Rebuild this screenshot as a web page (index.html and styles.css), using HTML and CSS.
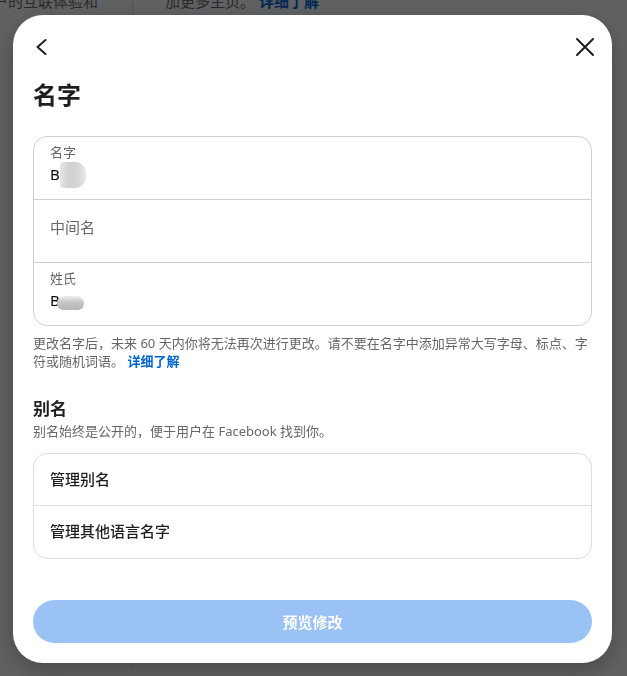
FILE: index.html
```html
<!DOCTYPE html>
<html lang="zh-CN">
<head>
  <meta charset="UTF-8">
  <meta name="viewport" content="width=device-width, initial-scale=1.0">
  <title>名字</title>
  <link rel="stylesheet" href="styles.css">
</head>
<body>

  <div class="page">
    <div class="side">
      <p class="side-text">户的互联体验和</p>
    </div>
    <div class="main">
      <p class="main-text">加更多主页。 <a href="#">详细了解</a></p>
    </div>
  </div>

  <div class="overlay">
    <div class="dialog">

      <div class="dialog-head">
        <svg class="icon" width="24" height="24" viewBox="0 0 24 24"><path d="M16.5 5 L8.5 12 L16.5 19" /></svg>
        <svg class="icon" width="24" height="24" viewBox="0 0 24 24"><path d="M4 4 L20 20 M20 4 L4 20" /></svg>
      </div>

      <h1 class="title">名字</h1>

      <div class="field-group">
        <div class="field">
          <span class="field-label">名字</span>
          <span class="field-value">B<span class="blur blur-first"></span></span>
        </div>
        <div class="field field-empty">
          <span class="field-placeholder">中间名</span>
        </div>
        <div class="field">
          <span class="field-label">姓氏</span>
          <span class="field-value">B<span class="blur blur-last"></span></span>
        </div>
      </div>

      <p class="hint">更改名字后，未来 60 天内你将无法再次进行更改。请不要在名字中添加异常大写字母、标点、字符或随机词语。 <a href="#">详细了解</a></p>

      <h2 class="section-title">别名</h2>
      <p class="section-sub">别名始终是公开的，便于用户在 Facebook 找到你。</p>

      <div class="list">
        <div class="list-item">管理别名</div>
        <div class="list-item">管理其他语言名字</div>
      </div>

      <button class="preview-btn" disabled>预览修改</button>
    </div>
  </div>

</body>
</html>
```

FILE: styles.css
```css
body {
  margin: 0;
  padding: 0;
  font-family: "Noto Sans", "Noto Sans CJK SC", sans-serif;
  background-color: #f0f2f5;
  color: #1c1e21;
}

/* page behind the dialog */
.page {
  display: flex;
  height: 676px;
  margin-top: -9px;
}

.side {
  width: 132px;
  border-right: 1px solid #d0d3d8;
  overflow: hidden;
}

.side-text {
  margin: 0 0 0 -7px;
  font-size: 15px;
  line-height: 20px;
  color: #65676b;
  white-space: nowrap;
}

.main {
  flex: 1;
  padding-left: 32px;
}

.main-text {
  margin: 0;
  font-size: 15px;
  line-height: 20px;
  color: #65676b;
}

.main-text a {
  color: #0064d1;
  font-weight: bold;
  text-decoration: none;
}

.overlay {
  position: fixed;
  inset: 0;
  display: flex;
  padding: 15px 15px 13px 13px;
  background-color: rgba(0, 0, 0, 0.6);
}

.dialog {
  flex: 1;
  display: flex;
  flex-direction: column;
  padding: 20px;
  background-color: #fff;
  border-radius: 30px;
  box-shadow: 0 8px 24px rgba(0, 0, 0, 0.25);
}

.dialog-head {
  display: flex;
  justify-content: space-between;
  height: 24px;
  margin: 0 -5px 0 -4px;
}

.icon path {
  fill: none;
  stroke: #1c1e21;
  stroke-width: 2;
  stroke-linecap: round;
  stroke-linejoin: round;
}

.title {
  margin: 21px 0 0 0;
  font-size: 24px;
  line-height: 30px;
  font-weight: bold;
}

.field-group {
  margin-top: 26px;
  border: 1px solid #ced0d4;
  border-radius: 14px;
}

.field {
  display: flex;
  flex-direction: column;
  height: 63px;
  padding: 7px 16px 0 16px;
  box-sizing: border-box;
  border-bottom: 1px solid #ced0d4;
}

.field:last-child {
  border-bottom: none;
  height: 62px;
}

.field-label {
  font-size: 13px;
  line-height: 16px;
  color: #65676b;
}

.field-value {
  margin-top: 4px;
  font-size: 15px;
  line-height: 20px;
  color: #050505;
}

.field-empty {
  justify-content: center;
  padding-top: 0;
  padding-bottom: 8px;
}

.field-placeholder {
  font-size: 15px;
  line-height: 20px;
  color: #65676b;
}

.blur {
  display: inline-block;
  vertical-align: top;
}

.blur-first {
  width: 26px;
  height: 26px;
  margin: -2px 0 0 0;
  background: linear-gradient(90deg, #e6e6e7 0%, #cfd0d2 35%, #d6d7d8 70%, #e8e8e9 100%);
  border-radius: 4px 11px 11px 4px;
}

.blur-last {
  width: 27px;
  height: 14px;
  margin: 6px 0 0 -3px;
  background: linear-gradient(180deg, #eeeeef 0%, #c4c5c7 45%, #b4b6b8 100%);
  border-radius: 10px 10px 8px 8px;
}

.hint {
  margin: 8px 0 0 0;
  font-size: 13px;
  line-height: 18px;
  color: #65676b;
}

.hint a,
.hint a:visited {
  color: #0064d1;
  font-weight: bold;
  text-decoration: none;
}

.section-title {
  margin: 28px 0 0 0;
  font-size: 17px;
  line-height: 22px;
  font-weight: bold;
}

.section-sub {
  margin: 2px 0 0 0;
  font-size: 13px;
  line-height: 18px;
  color: #65676b;
}

.list {
  margin-top: 13px;
  border: 1px solid #dadde1;
  border-radius: 14px;
}

.list-item {
  display: flex;
  align-items: center;
  height: 52px;
  padding: 0 16px 3px 16px;
  box-sizing: border-box;
  font-size: 15px;
  font-weight: 500;
  border-bottom: 1px solid #dadde1;
}

.list-item:last-child {
  border-bottom: none;
}

.preview-btn {
  margin-top: auto;
  height: 43px;
  border: none;
  border-radius: 22px;
  background-color: #9ac2f4;
  color: #fff;
  font-family: inherit;
  font-size: 15px;
  font-weight: bold;
}
```
